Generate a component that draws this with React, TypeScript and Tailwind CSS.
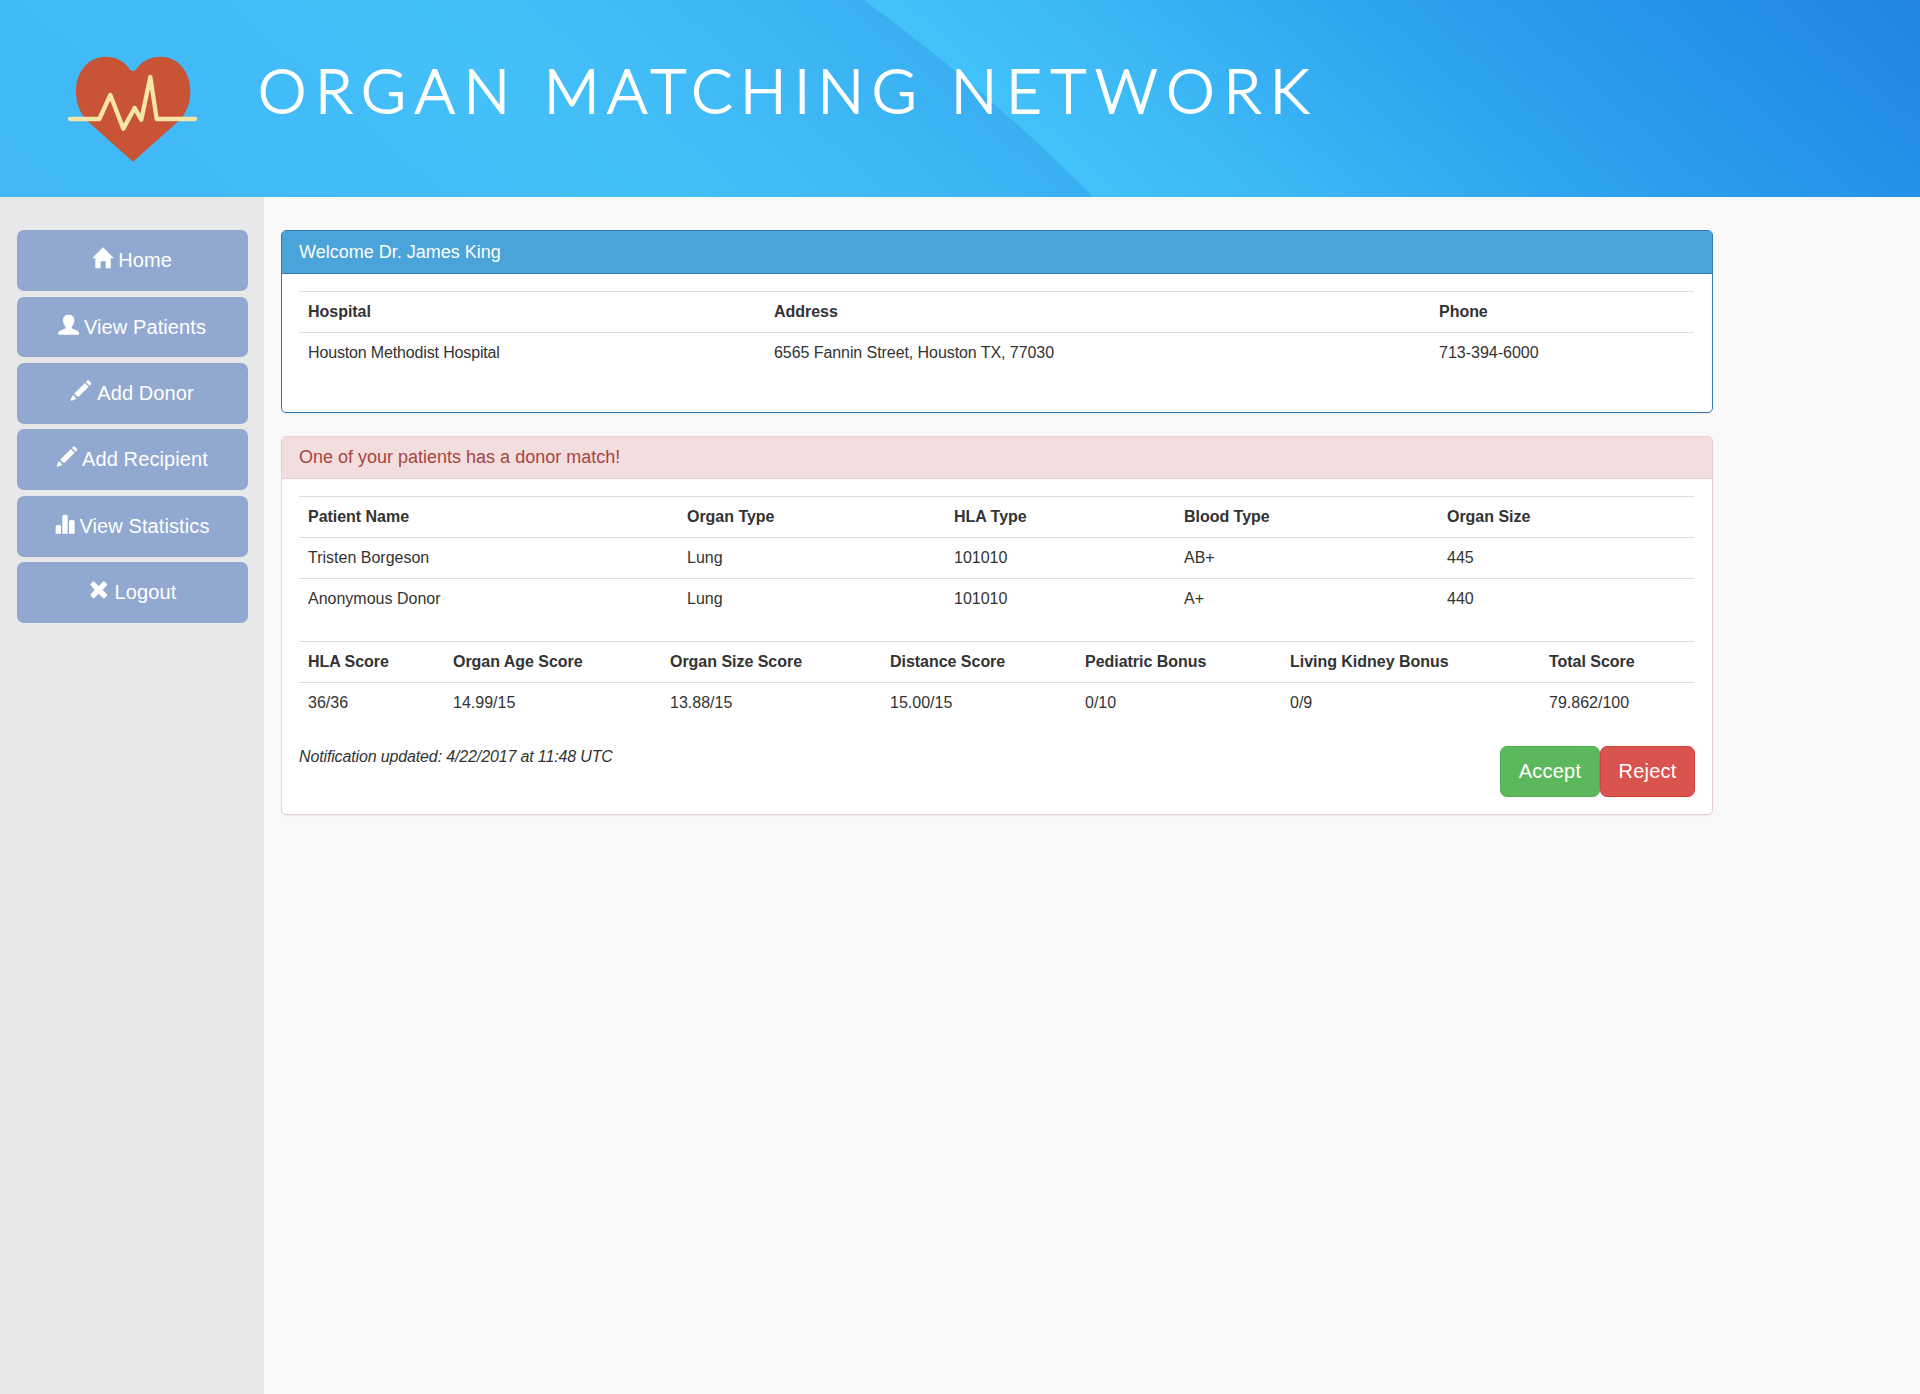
import type { ReactNode } from "react";

function Banner() {
  return (
    <svg className="absolute inset-0 h-full w-full" viewBox="0 0 1920 197" preserveAspectRatio="none" aria-hidden="true">
      <defs>
        <linearGradient id="left" gradientUnits="userSpaceOnUse" x1="0" y1="197" x2="475" y2="-343">
          <stop offset="0" stopColor="#41b7f6" />
          <stop offset="0.3" stopColor="#42bbf8" />
          <stop offset="0.58" stopColor="#44c0f8" />
          <stop offset="0.8" stopColor="#3fbaf6" />
          <stop offset="1" stopColor="#3ab0f2" />
        </linearGradient>
        <linearGradient id="right" gradientUnits="userSpaceOnUse" x1="864" y1="0" x2="1324" y2="-523">
          <stop offset="0" stopColor="#43c2fa" />
          <stop offset="0.2" stopColor="#3cb7f5" />
          <stop offset="0.45" stopColor="#2fa5ef" />
          <stop offset="0.6" stopColor="#299cec" />
          <stop offset="0.8" stopColor="#2490e8" />
          <stop offset="1" stopColor="#1f84e2" />
        </linearGradient>
      </defs>
      <rect width="1920" height="197" fill="url(#left)" />
      <path d="M864 0 Q990 92 1093 197 H1920 V0 Z" fill="url(#right)" />
    </svg>
  );
}

function HeartLogo() {
  return (
    <svg className="h-[130px] w-[170px] shrink-0" viewBox="0 0 510 390" aria-hidden="true">
      <path
        d="M249 365 L112 243 C90 222 78 190 78 154 C78 95 115 50 167 50 C200 50 226 66 241 90 Q249 97 257 90 C272 66 298 50 331 50 C385 50 421 95 421 154 C421 190 409 222 386 243 Z"
        fill="#c95335"
      />
      <path
        d="M60 237 H148 L181 165 L220 266 L254 204 L274 239 L301 111 L320 237 H435"
        fill="none"
        stroke="#f8e6a7"
        strokeWidth="13"
        strokeLinecap="round"
        strokeLinejoin="round"
      />
    </svg>
  );
}

function Glyph({ children }: { children: ReactNode }) {
  return (
    <svg className="h-[22px] w-[22px] shrink-0 overflow-visible" viewBox="0 0 66 66" fill="#fff" aria-hidden="true">
      {children}
    </svg>
  );
}

const home = (
  <Glyph>
    <path d="M33 1 L66 34 H56 V64 H41 V43 H26 V64 H10 V34 H0 Z" />
  </Glyph>
);
const user = (
  <Glyph>
    <path d="M32 2 C42 2 49 8 49 19 C49 28 46 34 41 38 V43 C48 47 63 50 63 56 V62 H1 V56 C1 50 16 47 23 43 V38 C18 34 15 28 15 19 C15 8 22 2 32 2 Z" />
  </Glyph>
);
const pencil = (
  <Glyph>
    <path d="M53 1 Q55 0 57 2 L63 8 Q65 10 63 13 L59 17 L48 6 Z M45 9 L56 20 L24 52 L22 48 L17 47 L16 41 L12 41 Z M9 44 L11 48 L15 50 L16 54 L20 56 L5 62 L2 61 L2 59 Z" />
  </Glyph>
);
const stats = (
  <Glyph>
    <path d="M2 62 V41 Q2 36 7 36 H13 Q18 36 18 41 V62 Z M22 62 V10 Q22 5 27 5 H33 Q38 5 38 10 V62 Z M42 62 V26 Q42 21 47 21 H54 Q59 21 59 26 V62 Z" />
  </Glyph>
);
const cross = (
  <Glyph>
    <path d="M19 8 L32 21 L45 8 Q48 6 50 8 L57 15 Q59 17 57 19 L44 33 L57 46 Q59 48 57 50 L50 57 Q48 59 45 57 L32 44 L19 57 Q17 59 14 57 L8 50 Q6 48 8 46 L20 33 L8 19 Q6 17 8 15 L14 8 Q17 6 19 8 Z" />
  </Glyph>
);

const navItems = [
  { label: "Home", icon: home, gap: "gap-[4px]", height: "h-[61px] mb-[6px]", lift: "-mt-[2px] pr-[1px]" },
  { label: "View Patients", icon: user, gap: "gap-[4px]", height: "h-[60px] mb-[6px]", lift: "mt-0 pr-[1px]" },
  { label: "Add Donor", icon: pencil, gap: "gap-[5px]", height: "h-[61px] mb-[5px]", lift: "-mt-[2px] pr-[1px]" },
  { label: "Add Recipient", icon: pencil, gap: "gap-[4px]", height: "h-[61px] mb-[6px]", lift: "-mt-[2px] pr-[1px]" },
  { label: "View Statistics", icon: stats, gap: "gap-[2px]", height: "h-[61px] mb-[5px]", lift: "-mt-[2px]" },
  { label: "Logout", icon: cross, gap: "gap-[5px]", height: "h-[61px]", lift: "-mt-[2px] pr-[1px]" },
];

type Column = { title: string; width: string; tracking?: string };

function DataTable({ columns, rows }: { columns: Column[]; rows: string[][] }) {
  return (
    <table className="w-[1395px] table-fixed border-collapse text-left text-[16px] leading-[22px]">
      <thead>
        <tr>
          {columns.map((c) => (
            <th key={c.title} className={`${c.width} h-[41px] border-t border-[#ddd] px-[9px] py-0 font-bold tracking-[-0.03px] whitespace-nowrap`}>
              {c.title}
            </th>
          ))}
        </tr>
      </thead>
      <tbody>
        {rows.map((r, i) => (
          <tr key={i}>
            {r.map((cell, j) => (
              <td key={j} className={`${columns[j].tracking ?? "tracking-normal"} h-[41px] border-t border-[#ddd] px-[9px] py-0 whitespace-nowrap`}>
                {cell}
              </td>
            ))}
          </tr>
        ))}
      </tbody>
    </table>
  );
}

export default function App() {
  return (
    <div className="flex h-[1394px] w-[1920px] flex-col overflow-hidden bg-[#f9f9f9] font-['Liberation_Sans',Arial,sans-serif] text-[#333]">
      <header className="relative h-[197px] shrink-0 overflow-hidden">
        <Banner />
        <div className="relative flex pt-[40px] pl-[50px]">
          <HeartLogo />
          <h1 className="flex pl-[38px] font-['Lato'] text-[61px] leading-[99px] font-light whitespace-nowrap text-white [-webkit-text-stroke:1.8px_white] [stroke-linejoin:round]">
            <span className="w-[286px] tracking-[9px]">ORGAN</span>
            <span className="w-[407px] tracking-[7.8px]">MATCHING</span>
            <span className="tracking-[9.2px]">NETWORK</span>
          </h1>
        </div>
      </header>
      <div className="flex flex-1">
        <nav className="w-[264px] shrink-0 bg-[#e8e8e8] pt-[33px] pl-[17px]">
          {navItems.map((n) => (
            <a key={n.label} className={`${n.height} ${n.gap} flex w-[231px] items-center justify-center rounded-[7px] bg-[#91a8d1] text-[20px] text-white`}>
              <span className="-mt-[5px]">{n.icon}</span>
              <span className={`${n.lift} tracking-[0.1px]`}>{n.label}</span>
            </a>
          ))}
        </nav>
        <main className="pt-[33px] pl-[17px]">
          <section className="h-[183px] w-[1432px] overflow-hidden rounded-[5px] border border-[#337ab7] bg-white shadow-[0_1px_1px_rgba(0,0,0,0.05)]">
            <h2 className="h-[43px] border-b border-[#337ab7] bg-[#4aa3d9] pl-[17px] text-[18px] leading-[42px] text-white">Welcome Dr. James King</h2>
            <div className="pt-[17px] pl-[17px]">
              <DataTable
                columns={[
                  { title: "Hospital", width: "w-[466px]", tracking: "tracking-[-0.15px]" },
                  { title: "Address", width: "w-[665px]", tracking: "tracking-[-0.07px]" },
                  { title: "Phone", width: "w-[264px]" },
                ]}
                rows={[["Houston Methodist Hospital", "6565 Fannin Street, Houston TX, 77030", "713-394-6000"]]}
              />
            </div>
          </section>
          <section className="mt-[23px] h-[379px] w-[1432px] overflow-hidden rounded-[5px] border border-[#ebccd1] bg-white shadow-[0_1px_1px_rgba(0,0,0,0.05)]">
            <h2 className="h-[42px] border-b border-[#ebccd1] bg-[#f2dede] pl-[17px] text-[18px] leading-[40px] text-[#a94442]">One of your patients has a donor match!</h2>
            <div className="flex flex-col gap-[21px] pt-[17px] pl-[17px]">
              <DataTable
                columns={[
                  { title: "Patient Name", width: "w-[379px]" },
                  { title: "Organ Type", width: "w-[267px]" },
                  { title: "HLA Type", width: "w-[230px]" },
                  { title: "Blood Type", width: "w-[263px]" },
                  { title: "Organ Size", width: "w-[256px]" },
                ]}
                rows={[
                  ["Tristen Borgeson", "Lung", "101010", "AB+", "445"],
                  ["Anonymous Donor", "Lung", "101010", "A+", "440"],
                ]}
              />
              <DataTable
                columns={[
                  { title: "HLA Score", width: "w-[145px]" },
                  { title: "Organ Age Score", width: "w-[217px]" },
                  { title: "Organ Size Score", width: "w-[220px]" },
                  { title: "Distance Score", width: "w-[195px]" },
                  { title: "Pediatric Bonus", width: "w-[205px]" },
                  { title: "Living Kidney Bonus", width: "w-[259px]" },
                  { title: "Total Score", width: "w-[154px]" },
                ]}
                rows={[["36/36", "14.99/15", "13.88/15", "15.00/15", "0/10", "0/9", "79.862/100"]]}
              />
              <div className="mt-[2px] flex w-[1396px] justify-between">
                <em className="text-[16px] leading-[22px] tracking-[-0.14px]">Notification updated: 4/22/2017 at 11:48 UTC</em>
                <div className="flex">
                  <button className="h-[51px] w-[100px] rounded-[7px] border border-[#4cae4c] bg-[#5cb85c] pb-[2px] text-[20px] tracking-[0.2px] text-white">Accept</button>
                  <button className="h-[51px] w-[95px] rounded-[7px] border border-[#d43f3a] bg-[#d9534f] pb-[2px] text-[20px] tracking-[0.2px] text-white">Reject</button>
                </div>
              </div>
            </div>
          </section>
        </main>
      </div>
    </div>
  );
}
